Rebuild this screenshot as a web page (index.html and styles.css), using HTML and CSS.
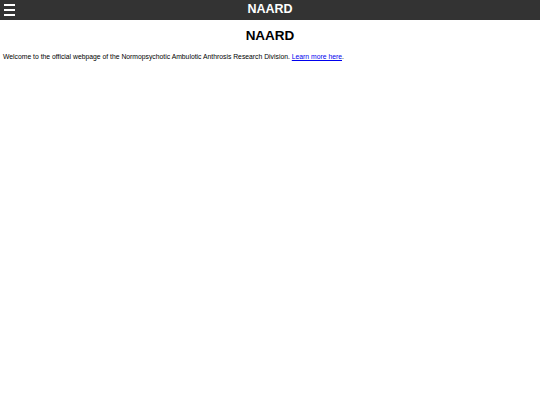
FILE: index.html
```html
<!DOCTYPE html>
<html>
<head>
<meta charset="utf-8">
<link rel="stylesheet" href="styles.css">
</head>
<body>
<header class="topbar">
  <span class="menu" aria-label="Menu"><i></i><i></i><i></i></span>
  <span class="brand">NAARD</span>
</header>
<main class="content">
  <h1 class="title">NAARD</h1>
  <p class="intro">Welcome to the official webpage of the Normopsychotic Ambulotic Anthrosis Research Division. <a href="#">Learn more here</a>.</p>
</main>
</body>
</html>
```
FILE: styles.css
```css
html, body {
  margin: 0;
  padding: 0;
  background: #fff;
  font-family: "Liberation Sans", Arial, sans-serif;
}
.topbar {
  position: relative;
  height: 20px;
  background: #333333;
  color: #fff;
  display: flex;
  align-items: center;
  justify-content: center;
}
.menu {
  position: absolute;
  left: 4px;
  top: 4px;
  display: flex;
  flex-direction: column;
  gap: 3px;
}
.menu i {
  display: block;
  width: 11px;
  height: 2px;
  background: #fff;
}
.brand {
  font-weight: bold;
  font-size: 12.5px;
  line-height: 20px;
  margin-top: -2px;
}
.content {
  padding: 0 3px;
}
.title {
  text-align: center;
  font-size: 13.5px;
  margin: 8px 0 9px;
  line-height: 16px;
}
.intro {
  margin: 0;
  font-size: 6.8px;
  line-height: 8px;
  color: #000;
}
.intro a {
  color: #0000ee;
}
```
